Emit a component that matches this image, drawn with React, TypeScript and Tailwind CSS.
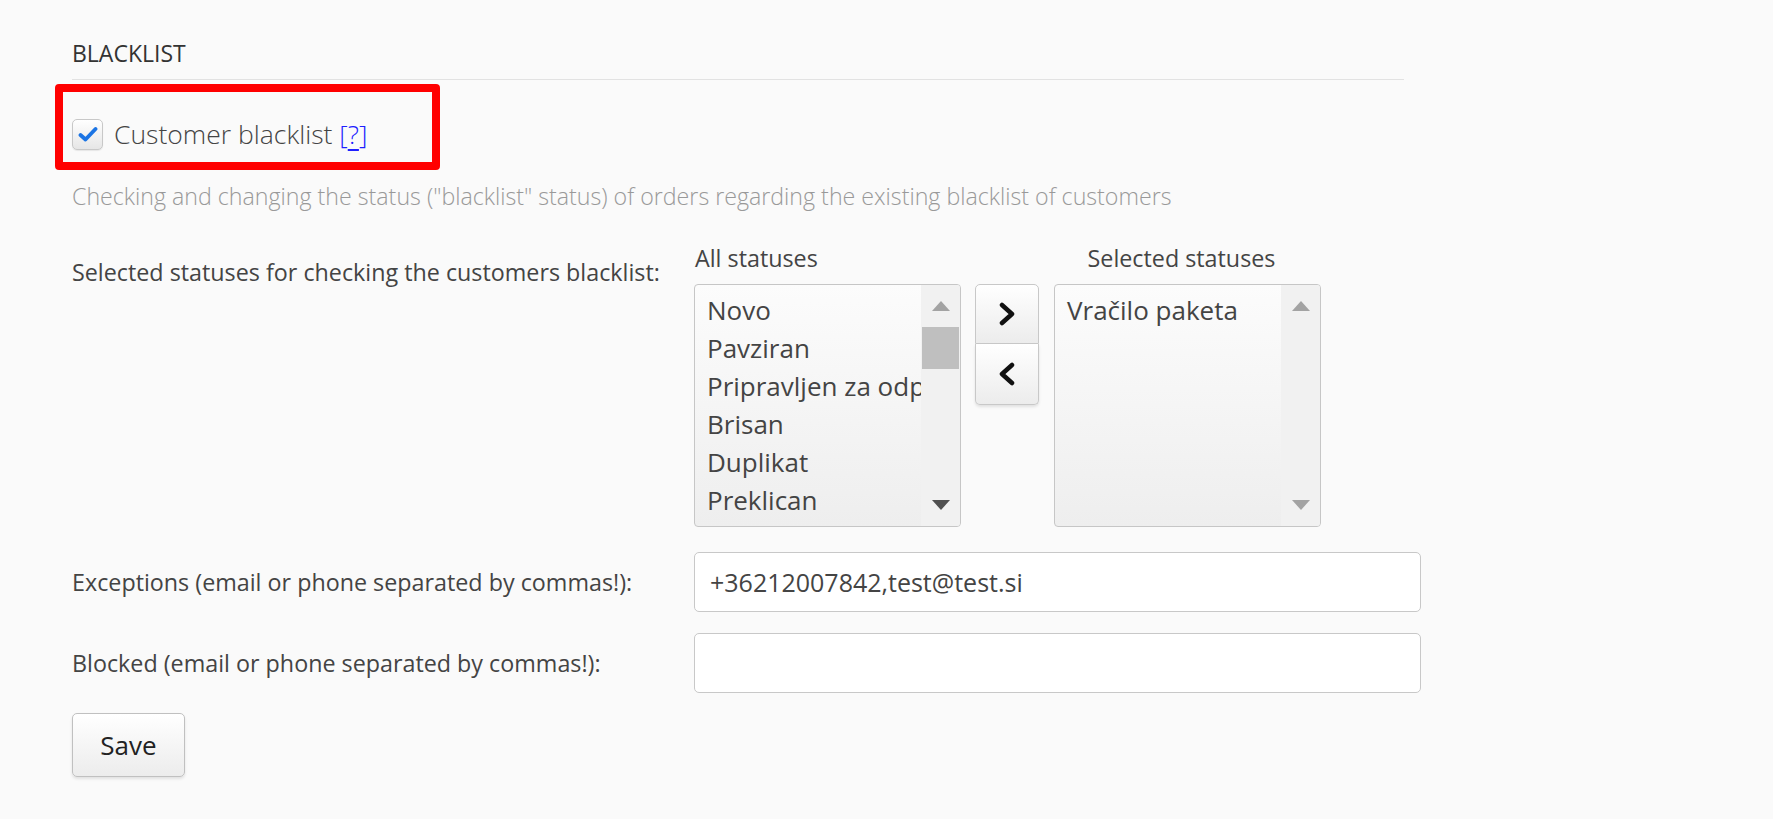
import React from "react";

const allStatuses = [
  "Novo",
  "Pavziran",
  "Pripravljen za odpremo",
  "Brisan",
  "Duplikat",
  "Preklican",
  "Vrnjeno kupcu",
];

const selectedStatuses = ["Vračilo paketa"];

function Triangle({ dir, color }: { dir: "up" | "down"; color: string }) {
  return (
    <svg width="18" height="10" viewBox="0 0 18 10">
      {dir === "up" ? <polygon points="9,0 18,10 0,10" fill={color} /> : <polygon points="0,0 18,0 9,10" fill={color} />}
    </svg>
  );
}

function ListBox({ items, scrollable }: { items: string[]; scrollable: boolean }) {
  return (
    <div className="flex h-[243px] w-[267px] overflow-hidden rounded-[4px] border border-[#c6c6c6] bg-gradient-to-b from-[#fcfcfc] to-[#eeeeee]">
      <div className="flex-1 overflow-hidden whitespace-nowrap pl-[12px] pt-[6px]">
        {items.map((s) => (
          <div key={s} className="text-[26px] leading-[38px] text-[#444]">
            {s}
          </div>
        ))}
      </div>
      <div className="flex w-[39px] shrink-0 flex-col items-center bg-[#f1f1f1]">
        <div className="flex h-[42px] items-center justify-center">
          <Triangle dir="up" color="#a3a3a3" />
        </div>
        {scrollable ? <div className="h-[42px] w-[37px] bg-[#bfbfbf]" /> : null}
        <div className="flex-1" />
        <div className="flex h-[42px] items-center justify-center">
          <Triangle dir="down" color={scrollable ? "#505050" : "#a3a3a3"} />
        </div>
      </div>
    </div>
  );
}

function Chevron({ dir }: { dir: "left" | "right" }) {
  return (
    <svg width="20" height="24" viewBox="0 0 20 24">
      <polyline
        points={dir === "right" ? "5,3 15,12 5,21" : "15,3 5,12 15,21"}
        fill="none"
        stroke="#111"
        strokeWidth="4.5"
        strokeLinecap="round"
        strokeLinejoin="round"
      />
    </svg>
  );
}

export default function App() {
  return (
    <div className="min-h-screen bg-[#fafafa] pl-[72px] pt-[37px] font-['Open_Sans',sans-serif]">
      <div className="w-[1332px]">
        <div className="text-[23px] leading-[32px] text-[#333]">BLACKLIST</div>
        <div className="mt-[10px] h-px bg-[#e2e2e2]" />

        <div className="relative mt-[34px] flex h-[40px] items-center">
          <div className="pointer-events-none absolute left-[-17px] top-[-30px] h-[86px] w-[385px] rounded-[4px] border-[8px] border-[#ff0000]" />
          <div className="flex h-[31px] w-[31px] shrink-0 items-center justify-center rounded-[5px] border border-[#c8c8c8] bg-gradient-to-b from-white to-[#e6e6e6] shadow-[0_1px_1px_rgba(0,0,0,0.08)]">
            <svg width="20" height="17" viewBox="0 0 20 17">
              <polyline points="2.5,9 7.5,13.5 17.5,3" fill="none" stroke="#1b74e4" strokeWidth="3.8" strokeLinecap="round" strokeLinejoin="round" />
            </svg>
          </div>
          <span className="ml-[11px] whitespace-nowrap text-[26.5px] font-light leading-[40px] text-[#444]">
            Customer blacklist{" "}
            <span className="text-[#1f1fff]">
              [<span className="underline underline-offset-[5px]">?</span>]
            </span>
          </span>
        </div>

        <div className="mt-[26px] whitespace-nowrap text-[23.2px] font-light leading-[32px] text-[#999]">
          Checking and changing the status ("blacklist" status) of orders regarding the existing blacklist of customers
        </div>

        <div className="mt-[30px] flex">
          <div className="w-[622px] shrink-0 pt-[14px] text-[23.3px] leading-[32px] text-[#444]">
            Selected statuses for checking the customers blacklist:
          </div>
          <div className="flex shrink-0 items-start">
            <div>
              <div className="pl-px text-[23.3px] leading-[32px] text-[#444]">All statuses</div>
              <div className="mt-[10px]">
                <ListBox items={allStatuses} scrollable />
              </div>
            </div>
            <div className="ml-[14px] mt-[42px] flex w-[64px] shrink-0 flex-col">
              <button className="flex h-[60px] items-center justify-center rounded-t-[5px] border border-[#c8c8c8] bg-gradient-to-b from-white to-[#ececec]">
                <Chevron dir="right" />
              </button>
              <button className="flex h-[61px] items-center justify-center rounded-b-[5px] border border-t-0 border-[#c8c8c8] bg-gradient-to-b from-white to-[#ececec] shadow-[0_2px_3px_rgba(0,0,0,0.1)]">
                <Chevron dir="left" />
              </button>
            </div>
            <div className="ml-[15px]">
              <div className="pr-[12px] text-center text-[23.3px] leading-[32px] text-[#444]">Selected statuses</div>
              <div className="mt-[10px]">
                <ListBox items={selectedStatuses} scrollable={false} />
              </div>
            </div>
          </div>
        </div>

        <div className="mt-[25px] flex items-center">
          <div className="w-[622px] shrink-0 text-[23.3px] leading-[32px] text-[#444]">
            Exceptions (email or phone separated by commas!):
          </div>
          <input
            readOnly
            value="+36212007842,test@test.si"
            className="h-[60px] w-[727px] shrink-0 rounded-[5px] border border-[#c8c8c8] bg-white px-[15px] text-[25px] text-[#444] outline-none"
          />
        </div>

        <div className="mt-[21px] flex items-center">
          <div className="w-[622px] shrink-0 text-[23.3px] leading-[32px] text-[#444]">
            Blocked (email or phone separated by commas!):
          </div>
          <input
            readOnly
            value=""
            className="h-[60px] w-[727px] shrink-0 rounded-[5px] border border-[#c8c8c8] bg-white px-[15px] text-[25px] text-[#444] outline-none"
          />
        </div>

        <button className="mt-[20px] h-[64px] w-[113px] rounded-[5px] border border-[#c0c0c0] bg-gradient-to-b from-white to-[#ececec] text-[26px] text-[#222] shadow-[0_2px_3px_rgba(0,0,0,0.1)]">
          Save
        </button>
      </div>
    </div>
  );
}
